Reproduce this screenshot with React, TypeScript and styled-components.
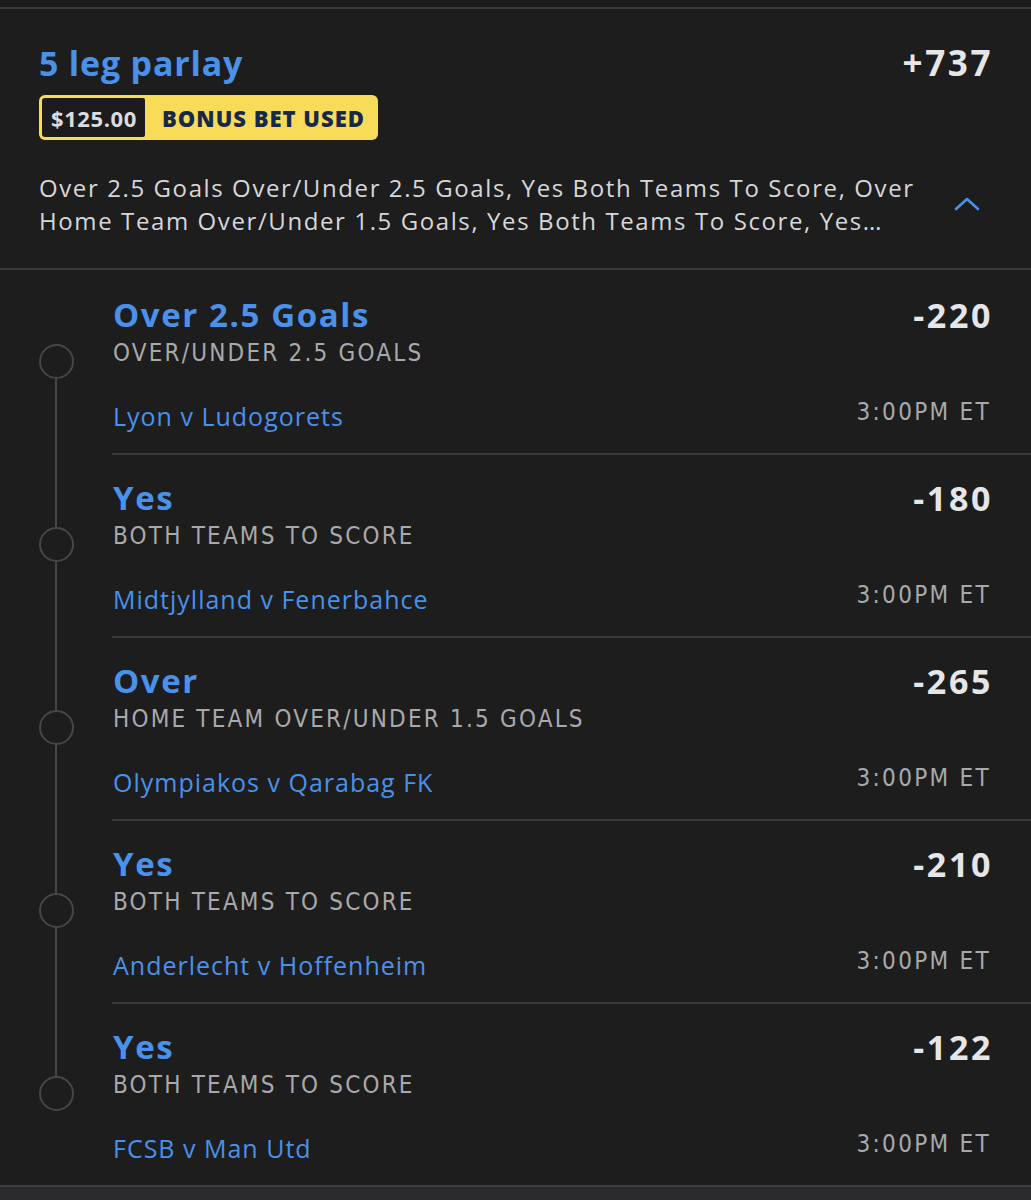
import React from "react";
import styled, { createGlobalStyle } from "styled-components";

const GlobalStyle = createGlobalStyle`
  html, body {
    margin: 0;
    padding: 0;
    background: #1d1d1d;
  }
  body {
    font-family: "Open Sans", Lato, sans-serif;
    -webkit-font-smoothing: antialiased;
  }
  * { box-sizing: border-box; }
`;

const BLUE = "#4a91ea";
const CONDENSED = `"DejaVu Sans Condensed", "DejaVu Sans", sans-serif`;

const Page = styled.div`
  width: 1031px;
  min-height: 1200px;
  background: #1d1d1d;
  display: flex;
  flex-direction: column;
  overflow: hidden;
`;

const TopStrip = styled.div`
  height: 9px;
  background: #1b1b1d;
  border-bottom: 2px solid #3a3a3b;
`;

const Header = styled.section`
  padding: 34px 40px 31px 39px;
  border-bottom: 2px solid #3a3a3b;
  display: flex;
  flex-direction: column;
`;

const TitleRow = styled.div`
  display: flex;
  justify-content: space-between;
  align-items: center;
  height: 40px;
`;

const ParlayTitle = styled.h1`
  margin: 0;
  font-size: 34px;
  font-weight: 700;
  color: ${BLUE};
  letter-spacing: 0.8px;
  line-height: 40px;
`;

const Odds = styled.span<{ $size?: number }>`
  font-size: ${(p) => p.$size ?? 34}px;
  font-weight: 700;
  color: #e6e6e9;
  line-height: 38px;
  letter-spacing: 2.6px;
  margin-right: -2px;
`;

const Badge = styled.div`
  margin-top: 12px;
  align-self: flex-start;
  display: flex;
  align-items: stretch;
  background: #f8dc59;
  border-radius: 6px;
  padding: 3px;
  height: 45px;
`;

const BadgeAmount = styled.span`
  background: #1c1c1c;
  border-radius: 3px 2px 2px 3px;
  color: #dcdce0;
  font-size: 22px;
  font-weight: 700;
  letter-spacing: 0.6px;
  display: flex;
  align-items: center;
  padding: 0 8px 0 9px;
`;

const BadgeLabel = styled.span`
  color: #17294a;
  font-size: 22px;
  font-weight: 800;
  letter-spacing: 1px;
  display: flex;
  align-items: center;
  padding: 0 10px 0 17px;
`;

const DescRow = styled.div`
  margin-top: 31px;
  display: flex;
  align-items: center;
`;

const Description = styled.p`
  margin: 0;
  width: 885px;
  font-size: 24px;
  line-height: 33px;
  color: #d7d7d9;
  letter-spacing: 1.6px;
  display: -webkit-box;
  -webkit-line-clamp: 2;
  -webkit-box-orient: vertical;
  overflow: hidden;
`;

const ChevronBox = styled.div`
  flex: 1;
  display: flex;
  justify-content: flex-end;
  padding-right: 11px;
`;

const Legs = styled.div`
  display: flex;
  flex-direction: column;
`;

const LegRow = styled.div`
  display: flex;
`;

const Timeline = styled.div`
  width: 112px;
  flex: none;
  display: flex;
  flex-direction: column;
  align-items: center;
`;

const Segment = styled.div<{ $hidden?: boolean }>`
  flex: 1;
  width: 2px;
  background: ${(p) => (p.$hidden ? "transparent" : "#464648")};
`;

const Node = styled.div`
  width: 35px;
  height: 35px;
  border-radius: 50%;
  border: 2px solid #464648;
  flex: none;
`;

const LegBody = styled.div<{ $first?: boolean }>`
  flex: 1;
  border-top: 2px solid ${(p) => (p.$first ? "transparent" : "#3a3a3b")};
  padding: 24px 40px 22px 1px;
  display: flex;
  flex-direction: column;
`;

const LegTop = styled.div`
  display: flex;
  justify-content: space-between;
  align-items: center;
  height: 38px;
`;

const Selection = styled.span`
  font-size: 33px;
  font-weight: 700;
  color: ${BLUE};
  line-height: 38px;
  letter-spacing: 1.6px;
`;

const Market = styled.div`
  margin-top: 6px;
  font-family: ${CONDENSED};
  font-stretch: condensed;
  font-size: 24px;
  line-height: 26px;
  color: #a9a9ab;
  letter-spacing: 2.2px;
  text-transform: uppercase;
`;

const EventRow = styled.div`
  margin-top: 35px;
  display: flex;
  justify-content: space-between;
  align-items: flex-start;
`;

const EventName = styled.span`
  font-size: 25px;
  line-height: 30px;
  color: ${BLUE};
  letter-spacing: 1px;
`;

const EventTime = styled.span`
  font-family: ${CONDENSED};
  font-stretch: condensed;
  font-size: 24px;
  line-height: 22px;
  color: #a9a9ab;
  letter-spacing: 2.3px;
`;

const Footer = styled.div`
  flex: 1;
  min-height: 14px;
  border-top: 2px solid #3c3c3e;
  background: #2b2b2d;
`;

type Leg = {
  selection: string;
  market: string;
  event: string;
  odds: string;
};

const legs: Leg[] = [
  { selection: "Over 2.5 Goals", market: "Over/Under 2.5 Goals", event: "Lyon v Ludogorets", odds: "-220" },
  { selection: "Yes", market: "Both Teams To Score", event: "Midtjylland v Fenerbahce", odds: "-180" },
  { selection: "Over", market: "Home Team Over/Under 1.5 Goals", event: "Olympiakos v Qarabag FK", odds: "-265" },
  { selection: "Yes", market: "Both Teams To Score", event: "Anderlecht v Hoffenheim", odds: "-210" },
  { selection: "Yes", market: "Both Teams To Score", event: "FCSB v Man Utd", odds: "-122" },
];

const ChevronUp = () => (
  <svg width="26" height="16" viewBox="0 0 26 16" fill="none">
    <polyline
      points="2,13 13,3 24,13"
      stroke={BLUE}
      strokeWidth="2.6"
      strokeLinecap="round"
      strokeLinejoin="round"
    />
  </svg>
);

export default function App() {
  return (
    <>
      <GlobalStyle />
      <Page>
        <TopStrip />
        <Header>
          <TitleRow>
            <ParlayTitle>5 leg parlay</ParlayTitle>
            <Odds $size={35}>+737</Odds>
          </TitleRow>
          <Badge>
            <BadgeAmount>$125.00</BadgeAmount>
            <BadgeLabel>BONUS BET USED</BadgeLabel>
          </Badge>
          <DescRow>
            <Description>
              Over 2.5 Goals Over/Under 2.5 Goals, Yes Both Teams To Score, Over Home Team
              Over/Under 1.5 Goals, Yes Both Teams To Score, Yes Both Teams To Score, Yes Both
              Teams To Score
            </Description>
            <ChevronBox>
              <ChevronUp />
            </ChevronBox>
          </DescRow>
        </Header>
        <Legs>
          {legs.map((leg, i) => (
            <LegRow key={i}>
              <Timeline>
                <Segment $hidden={i === 0} />
                <Node />
                <Segment $hidden={i === legs.length - 1} />
              </Timeline>
              <LegBody $first={i === 0}>
                <LegTop>
                  <Selection>{leg.selection}</Selection>
                  <Odds>{leg.odds}</Odds>
                </LegTop>
                <Market>{leg.market}</Market>
                <EventRow>
                  <EventName>{leg.event}</EventName>
                  <EventTime>3:00PM ET</EventTime>
                </EventRow>
              </LegBody>
            </LegRow>
          ))}
        </Legs>
        <Footer />
      </Page>
    </>
  );
}
